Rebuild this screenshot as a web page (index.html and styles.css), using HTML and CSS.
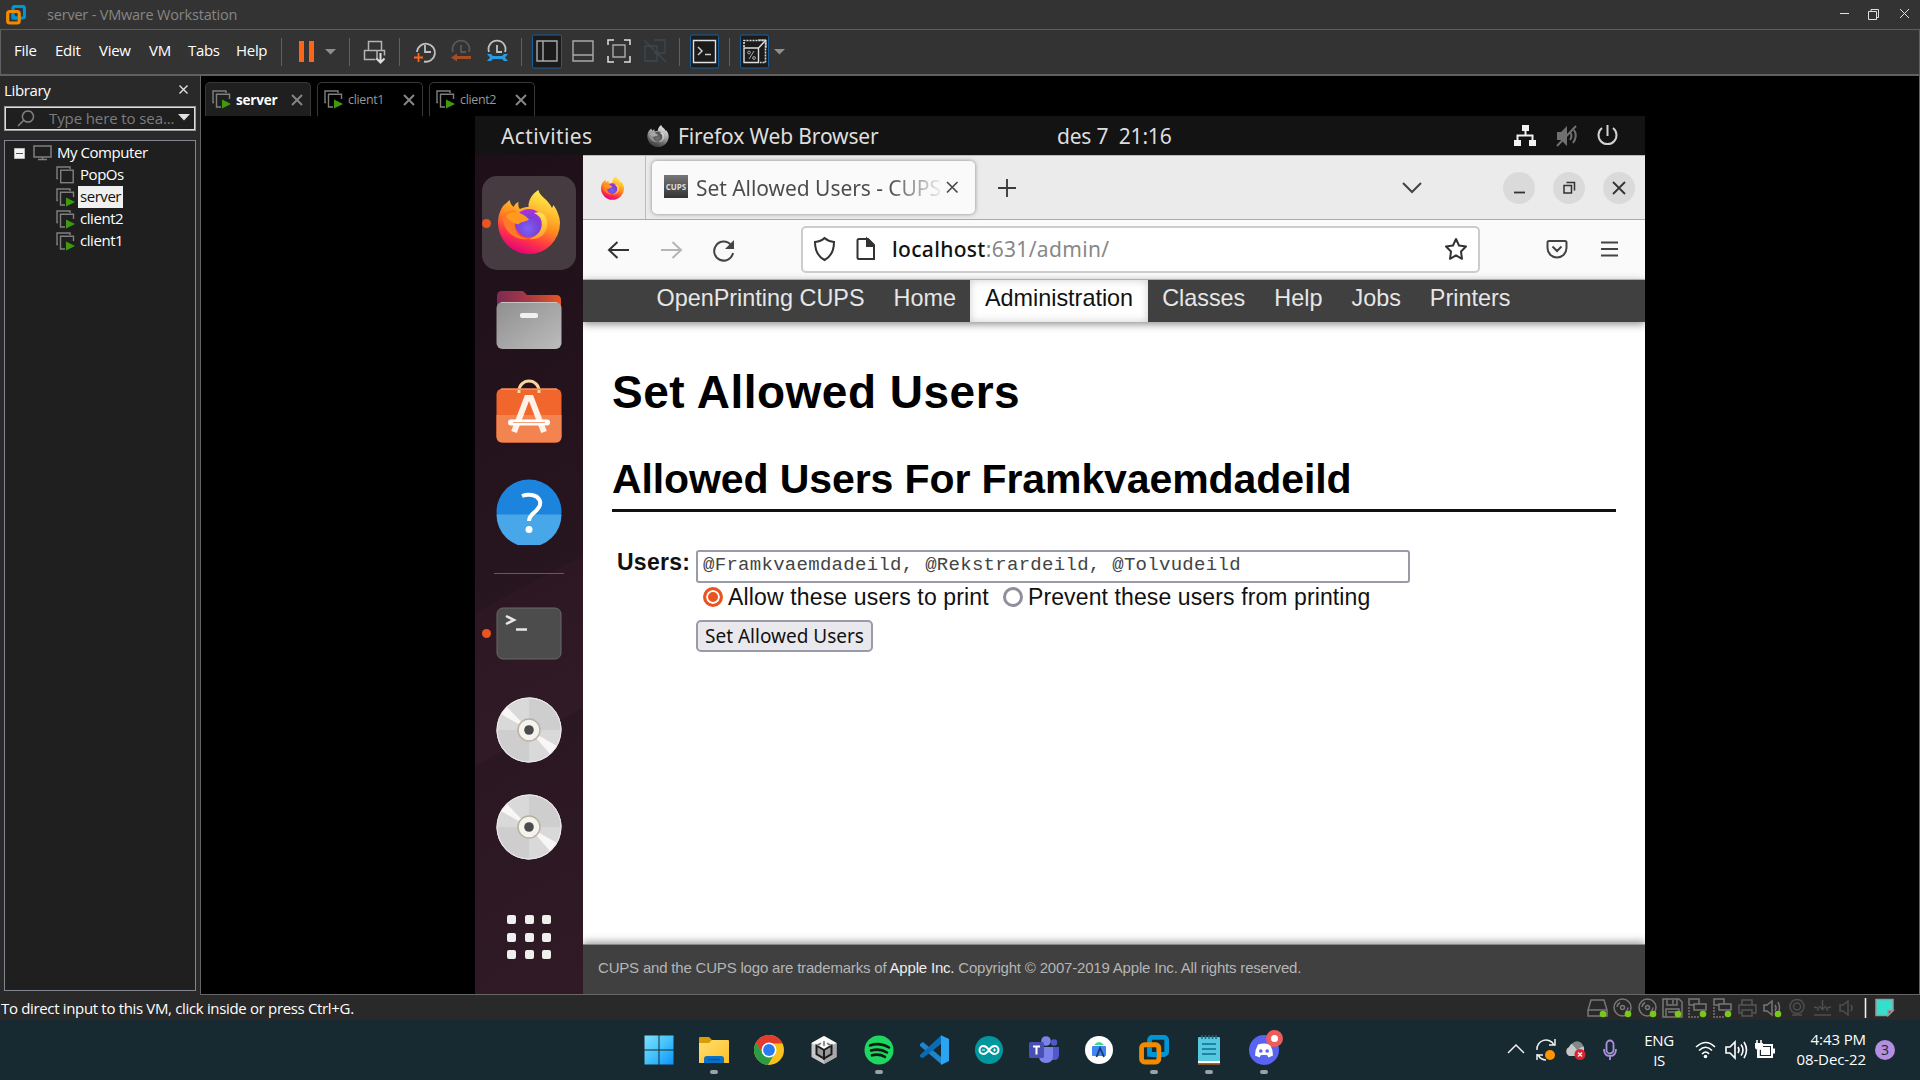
FILE: index.html
```html
<!DOCTYPE html>
<html lang="en">
<head>
<meta charset="utf-8">
<title>server - VMware Workstation</title>
<link rel="stylesheet" href="styles.css">
</head>
<body>
<svg class="defs" width="0" height="0">
  <defs>
    <linearGradient id="ff-body" x1="0.75" y1="0" x2="0.35" y2="1"><stop offset="0" stop-color="#fff44f"/><stop offset=".3" stop-color="#ffbd2f"/><stop offset=".52" stop-color="#ff8a1e"/><stop offset=".76" stop-color="#ff3647"/><stop offset="1" stop-color="#e3007a"/></linearGradient>
    <radialGradient id="ff-globe" cx=".45" cy=".7" r=".7"><stop offset="0" stop-color="#7a63f5"/><stop offset=".6" stop-color="#7b3fd6"/><stop offset="1" stop-color="#b22fd8"/></radialGradient>
    <linearGradient id="ff-swirl" x1="0" y1="0" x2="0" y2="1"><stop offset="0" stop-color="#ffe64a"/><stop offset="1" stop-color="#ff9a26"/></linearGradient>
    <linearGradient id="folder-front" x1="0" y1="0" x2="1" y2="1"><stop offset="0" stop-color="#8f8f8f"/><stop offset="1" stop-color="#bcbcbc"/></linearGradient>
    <linearGradient id="folder-back" x1="0" y1="0" x2="1" y2="0"><stop offset="0" stop-color="#7d2a55"/><stop offset=".5" stop-color="#a83a43"/><stop offset="1" stop-color="#e95420"/></linearGradient>
    <linearGradient id="win" x1="0" y1="0" x2="1" y2="1"><stop offset="0" stop-color="#7fe0fc"/><stop offset=".5" stop-color="#43c2fb"/><stop offset="1" stop-color="#0a94fb"/></linearGradient>
    <linearGradient id="files" x1="0" y1="0" x2="1" y2="1"><stop offset="0" stop-color="#ffdf70"/><stop offset="1" stop-color="#fdbf26"/></linearGradient>
    <symbol id="firefox" viewBox="0 0 62 64">
      <path fill="url(#ff-body)" d="M11.500 10C12.500 14 14 15.500 15.500 17C17 14 19 12.500 20.500 12C20 15 20.500 17.500 22 19C25 17.500 28 17 30.500 17C30 10 35 3 40.500 0C41 6 51 10 54 18L55.500 15C59 20 62 27 62 33A31 31 0 0 1 0 33C0 25 3 18 6 15C8 13 10 12 11.500 10Z"/>
      <circle cx="31" cy="33" r="14" fill="url(#ff-globe)"/>
      <path fill="url(#ff-swirl)" d="M36 23C42 21 46 23 48 28C53 40 43 51 31 49C40 46 45 40 43.500 31C42.500 27 40 25 36 23Z"/>
      <path fill="#ff7a26" d="M5 28C8 22 13 20 18 21C16 27 15 36 18 41C20 46 25 48 31 49C17 51 5 41 5 28Z"/>
      <path fill="#ff9a1f" d="M8 26C14 19 24 22 31 29.500C28 32 24 31 20 34.500C15 33 10 30 8 26Z"/>
    </symbol>
    <symbol id="vmware" viewBox="0 0 20 20">
      <rect x="7" y="1.500" width="11.500" height="11.500" rx="2" fill="none" stroke="#0095d5" stroke-width="3.200"/>
      <rect x="1.700" y="6.500" width="11.500" height="11.500" rx="2" fill="none" stroke="#f38b00" stroke-width="3.200"/>
      <path d="M7 8v5h5" fill="none" stroke="#0095d5" stroke-width="3"/>
    </symbol>
    <symbol id="vm-off" viewBox="0 0 19 19">
      <path d="M2 12.500H1V1h13v2" fill="none" stroke="#808080" stroke-width="1.400"/>
      <rect x="4.700" y="4.200" width="12.500" height="12.500" fill="#1f1f1f" stroke="#808080" stroke-width="1.400"/>
    </symbol>
    <symbol id="vm-on" viewBox="0 0 19 19">
      <path d="M2 12.500H1V1h13v2M9 17H4.500V4.200H17.500V9" fill="none" stroke="#808080" stroke-width="1.400"/>
      <path d="M10 9.500 19 14 10 18.500Z" fill="#3f9a10"/>
    </symbol>
    <symbol id="disc" viewBox="0 0 66 66">
      <circle cx="33" cy="33" r="32.500" fill="#d9d9d9"/>
      <path d="M33 33V.5A32.500 32.500 0 0 1 65.500 33ZM33 33V65.500A32.500 32.500 0 0 1 .5 33Z" fill="#cecece"/>
      <path d="M33 33 5 17 11 10ZM33 33 61 49 54 57Z" fill="#f8f7f5"/>
      <circle cx="33" cy="33" r="32" fill="none" stroke="#ececec"/>
      <circle cx="33" cy="33" r="11" fill="#f5f3ef" stroke="#b9b09e" stroke-width="1.400"/>
      <circle cx="33" cy="33" r="4.800" fill="#4b4b4b"/>
    </symbol>
    <symbol id="s-disc" viewBox="0 0 20 20"><circle cx="9.500" cy="9.500" r="8.500"/><circle cx="9.500" cy="9.500" r="2"/><path d="M4 9a6 6 0 0 1 3-4.500M15 9.500a6 6 0 0 1-2 4"/></symbol>
    <symbol id="s-net" viewBox="0 0 20 20"><path d="M6 7H1V1h10v5M6 7v5h12V6H6Z"/><path d="M1 9v10h11" stroke-dasharray="2 1"/></symbol>
  </defs>
</svg>

<div class="desktop">
  <header class="titlebar">
    <svg class="app-logo" width="20" height="20"><use href="#vmware"/></svg>
    <span class="app-title">server - VMware Workstation</span>
    <svg class="win-controls" width="84" height="20" fill="none" stroke="#e0e0e0"><path d="M5 9.500h9M33.500 7.500h8v8h-8ZM36 7V5.500h7.500v8H42M65 5l9 9M74 5l-9 9"/></svg>
  </header>

  <div class="toolbar">
    <nav class="menu"><span class="m1">File</span><span class="m2">Edit</span><span class="m3">View</span><span class="m4">VM</span><span class="m5">Tabs</span><span class="m6">Help</span></nav>
    <i class="sep"></i>
    <svg class="tool pause" width="67" height="34"><path d="M17 7h5v21h-5ZM27 7h5v21h-5Z" fill="#ff6517"/><path d="M43 15h11l-5.500 5.500Z" fill="#8e8e8e"/></svg>
    <i class="sep"></i>
    <svg class="tool" width="49" height="34" fill="none" stroke="#b4b4b4" stroke-width="1.500"><path d="M18.500 16V7.500h13V16M14.500 16.500h20v5M27 16.500v5M14.500 16v9.500h11M27 25.500v-9"/><path d="M30.500 19v9M26.500 24.500l4 4 4-4" stroke="#ddd" stroke-width="2"/></svg>
    <i class="sep"></i>
    <svg class="tool" width="121" height="34">
      <path d="M17 18A9 9 0 1 1 24 27.500M25 11v7h6" fill="none" stroke="#c0c0c0" stroke-width="1.800"/><path d="M14 23.500h9M18.500 19v9" stroke="#ff6517" stroke-width="1.800"/>
      <path d="M53 18A8.500 8.500 0 1 1 69 18M61 11v7h5" fill="none" stroke="#585858" stroke-width="1.800"/><path d="M51 23.500l6-4v2.500h14v3H57v2.500Z" fill="#a34e25"/>
      <path d="M89 18A8.500 8.500 0 1 1 105 18M97 11v7h5" fill="none" stroke="#c0c0c0" stroke-width="1.800"/><path d="M87 20h4l2 2h9l2-2h4l-3 3.500 3 3.500h-4l-2-2h-9l-2 2h-4l3-3.500Z" fill="#249de4"/>
    </svg>
    <i class="sep"></i>
    <svg class="tool" width="157" height="36">
      <rect x="10.500" y="2" width="29" height="33" rx="1.500" fill="#1b1b1b" stroke="#17609f"/>
      <g fill="none" stroke="#aaa" stroke-width="1.400"><path d="M15 8h20v20H15ZM21 8v20M51 8h20v20H51ZM51 22h20"/><path d="M91 12h12v12H91Z"/></g>
      <path d="M86 12V7h6M102 7h6v5M108 23v6h-6M92 29h-6v-6" fill="none" stroke="#e0e0e0" stroke-width="1.500"/>
      <path d="M132 7h11v13h-11M123 13h12v15h-12ZM122 7l22 22" fill="none" stroke="#3b4854" stroke-width="1.300"/>
    </svg>
    <i class="sep"></i>
    <svg class="tool" width="49" height="36"><rect x="10.500" y="2" width="28" height="33" rx="1.500" fill="#1b1b1b" stroke="#17609f"/><path d="M13.500 7.500h22v22h-22Z" fill="none" stroke="#e0e0e0" stroke-width="1.400"/><path d="m18 14 4 4-4 4M25 21.500h6" fill="none" stroke="#ccc" stroke-width="1.500"/></svg>
    <i class="sep"></i>
    <svg class="tool" width="60" height="36"><rect x="10.500" y="2" width="28" height="33" rx="1.500" fill="#1b1b1b" stroke="#17609f"/><path d="M14 15h14.500v14.500H14ZM28.500 15l7-7.500" fill="none" stroke="#ddd" stroke-width="1.400"/><path d="M14 14V7.500h21.500v22H30" fill="none" stroke="#ddd" stroke-width="1.600" stroke-dasharray="2 1"/><path d="M28 7h8v8" fill="none" stroke="#ddd"/><circle cx="19" cy="19.500" r="1.400" fill="none" stroke="#aaa"/><circle cx="24" cy="25" r="1.400" fill="none" stroke="#aaa"/><path d="m24 18-5 8" stroke="#aaa"/><path d="M44 16h11l-5.500 5.500Z" fill="#8e8e8e"/></svg>
  </div>

  <main class="workspace">
    <aside class="library">
      <div class="lib-head"><span>Library</span><svg width="10" height="10"><path d="m.5.5 8 8m0-8-8 8" stroke="#e6e6e6" stroke-width="1.300"/></svg></div>
      <div class="search">
        <svg width="18" height="18"><path d="M1 17l5.500-5.500M11 2a5.500 5.500 0 1 1-.1 0Z" fill="none" stroke="#808080" stroke-width="1.500"/></svg>
        <span>Type here to sea...</span>
        <svg width="12" height="7"><path d="M0 0h12L6 6.500Z" fill="#e0e0e0"/></svg>
      </div>
      <ul class="tree">
        <li class="root"><svg width="11" height="11"><path d="M.5.5h10v10H.5Z" fill="#f4f4f4" stroke="#bbb"/><path d="M2 5.500h7" stroke="#3b4fa0"/></svg><svg width="19" height="16"><path d="M1 1h17v11H1ZM5 14.500h9M9.500 12v2" fill="none" stroke="#808080" stroke-width="1.500"/></svg><span>My Computer</span></li>
        <li><svg width="19" height="19"><use href="#vm-off"/></svg><span>PopOs</span></li>
        <li class="selected"><svg width="19" height="19"><use href="#vm-on"/></svg><span>server</span></li>
        <li><svg width="19" height="19"><use href="#vm-on"/></svg><span>client2</span></li>
        <li><svg width="19" height="19"><use href="#vm-on"/></svg><span>client1</span></li>
      </ul>
    </aside>

    <section class="console">
      <div class="vm-tabs">
        <div class="vm-tab active"><svg width="19" height="19"><use href="#vm-on"/></svg><span>server</span><svg class="x" width="12" height="12"><path d="m1 1 10 10m0-10L1 11"/></svg></div>
        <div class="vm-tab"><svg width="19" height="19"><use href="#vm-on"/></svg><span>client1</span><svg class="x" width="12" height="12"><path d="m1 1 10 10m0-10L1 11"/></svg></div>
        <div class="vm-tab"><svg width="19" height="19"><use href="#vm-on"/></svg><span>client2</span><svg class="x" width="12" height="12"><path d="m1 1 10 10m0-10L1 11"/></svg></div>
      </div>

      <div class="guest">
        <div class="gnome-bar">
          <div class="gnome-left"><span class="activities">Activities</span><svg class="ff-mini" width="22" height="22"><use href="#firefox"/></svg><span class="app-name">Firefox Web Browser</span></div>
          <span class="clock">des 7&nbsp; 21:16</span>
          <svg class="gnome-status" width="106" height="24">
            <path d="M9 1h7v6H9ZM1 16h7v6H1ZM16 16h7v6h-7Z" fill="#f2f2f2"/><path d="M12.500 6v6M4.500 17v-5.500h15V17" fill="none" stroke="#f2f2f2" stroke-width="2"/>
            <path d="M44 8h4l6-6v20l-6-6h-4Z" fill="#707070"/><path d="M44 22 63 2M57 8q3 4 0 8M61 6q4 6-1 13" fill="none" stroke="#707070" stroke-width="2"/>
            <path d="M89 4a9 9 0 1 0 11 0M94.500 1v11" fill="none" stroke="#d2d2d2" stroke-width="2"/>
          </svg>
        </div>

        <div class="guest-body">
          <div class="dock">
            <div class="dock-tile"><i class="dot"></i><svg width="62" height="64"><use href="#firefox"/></svg></div>
            <svg class="d-folder" width="66" height="60"><path d="M1 18V6q0-5 5-5h20q2 0 3 2l2 2h29q5 0 5 5v10Z" fill="url(#folder-back)"/><rect x=".5" y="12" width="65" height="47" rx="6" fill="url(#folder-front)"/><path d="M5 12.500h56" stroke="#c5c5c5"/><rect x="24" y="23" width="18" height="5" rx="2" fill="#f0f0f0"/></svg>
            <svg class="d-store" width="66" height="64"><path d="M23 14V12a10 10 0 0 1 20 0v2" fill="none" stroke="#f7d6a0" stroke-width="3"/><rect x=".5" y="9.500" width="65" height="54" rx="6" fill="#f1662c"/><path d="M.5 36h65v21.500q0 6-6 6h-53q-6 0-6-6Z" fill="#f4844f"/><path d="M5 10h56" stroke="#ffa77d"/><path d="M23 14V11M43 14V11" stroke="#f7d6a0" stroke-width="3"/><path d="M18 53 31 19h4l13 34" fill="none" stroke="#fff0e8" stroke-width="6"/><path d="M15 43.500h36" stroke="#fff" stroke-width="6" stroke-linecap="round"/><path d="M17 43.500h32" stroke="#f4a27d"/></svg>
            <svg class="d-help" width="66" height="66"><circle cx="33" cy="33" r="32.500" fill="#1c84dc"/><path d="M.5 35.500h65A32.500 32.500 0 0 1 .5 35.500Z" fill="#48a7e8"/><path d="M26 17q5-2 10-1c7 1 10 7 7 12-3 6-10 7-10 14" fill="none" stroke="#fff" stroke-width="4"/><circle cx="33" cy="50.500" r="3.500" fill="#fff"/></svg>
            <i class="d-sep"></i>
            <div class="d-term"><i class="dot"></i><svg width="66" height="53"><rect x="1" y="1" width="64" height="51" rx="6" fill="#4c4c4c" stroke="#696969"/><path d="m10 9 8 4-8 4M20 22.500h11" fill="none" stroke="#e6e6e6" stroke-width="2.500"/></svg></div>
            <svg class="d-disc1" width="66" height="66"><use href="#disc"/></svg>
            <svg class="d-disc2" width="66" height="66"><use href="#disc"/></svg>
            <div class="d-grid"><i></i><i></i><i></i><i></i><i></i><i></i><i></i><i></i><i></i></div>
          </div>

          <div class="browser">
            <div class="tabstrip">
              <div class="pinned"><svg width="23" height="24"><use href="#firefox"/></svg></div>
              <div class="tab"><b class="favicon">CUPS</b><span class="tab-title">Set Allowed Users - CUPS</span><svg width="13" height="13"><path d="m1 1 10.500 10.500M11.500 1 1 11.500" stroke="#4a4a4a" stroke-width="1.700"/></svg></div>
              <svg class="plus" width="18" height="18"><path d="M9 0v18M0 9h18" stroke="#3d3d3d" stroke-width="1.900"/></svg>
              <svg class="alltabs" width="20" height="12"><path d="m1 1 9 9 9-9" fill="none" stroke="#444" stroke-width="2"/></svg>
              <div class="wbtn"><svg width="14" height="14"><path d="M2 11.500h11" stroke="#333" stroke-width="1.800"/></svg></div>
              <div class="wbtn"><svg width="14" height="14"><path d="M2 4.500h7.500V12H2ZM4.500 1.500h8v8" fill="none" stroke="#333" stroke-width="1.500"/></svg></div>
              <div class="wbtn"><svg width="14" height="14"><path d="m1 1 12 12M13 1 1 13" stroke="#333" stroke-width="1.800"/></svg></div>
            </div>
            <div class="navbar">
              <svg class="nav-icons" width="128" height="24" fill="none" stroke-width="2"><path d="M22 12H2M10.500 4 2 12l8.500 8" stroke="#333"/><path d="M54 12h20M65.500 4l8.500 8-8.500 8" stroke="#b5b5b5"/><path d="M124 7a9.500 9.500 0 1 0 2 8" stroke="#444"/><path d="M127 2v9h-9Z" fill="#444"/></svg>
              <div class="urlbar">
                <svg width="62" height="26" fill="none" stroke="#333" stroke-width="2"><path d="M11.500 2q4 3.500 9.500 4 0 13-9.500 18Q2 19 2 6q6-.5 9.500-4Z"/><path d="M46 3h9l6 6v14H46q-1.500 0-1.500-1.500v-17Q44.500 3 46 3Z"/><path d="M54 3v7h7Z" fill="#333"/></svg>
                <span class="url"><b>localhost</b>:631/admin/</span>
                <svg class="star" width="24" height="24"><path d="m12 2 3 6.500 7 1-5 5 1 7.300-6-3.500-6 3.500 1-7.300-5-5 7-1Z" fill="none" stroke="#333" stroke-width="2" stroke-linejoin="round"/></svg>
              </div>
              <svg class="nav-right" width="73" height="22" fill="none" stroke="#444" stroke-width="2"><path d="M3 2h16q1.500 0 1.500 1.500V9a9.500 9.500 0 0 1-19 0V3.500Q1.500 2 3 2ZM6.500 7.500 11 12l4.500-4.500M55 3.500h17M55 10h17M55 16.500h17"/></svg>
            </div>
            <div class="cups-nav"><span class="brand">OpenPrinting CUPS</span><span>Home</span><span class="current">Administration</span><span>Classes</span><span>Help</span><span>Jobs</span><span>Printers</span></div>
            <div class="cups-page">
              <h1>Set Allowed Users</h1>
              <h2>Allowed Users For Framkvaemdadeild</h2>
              <div class="form">
                <b class="label">Users:</b>
                <div class="fields">
                  <div class="input"><span>@Framkvaemdadeild, @Rekstrardeild, @Tolvudeild</span></div>
                  <div class="radios"><i class="radio on"></i><span class="r1">Allow these users to print</span><i class="radio"></i><span class="r2">Prevent these users from printing</span></div>
                  <div class="button"><span>Set Allowed Users</span></div>
                </div>
              </div>
            </div>
            <div class="cups-foot"><span>CUPS and the CUPS logo are trademarks of <b>Apple Inc.</b> Copyright © 2007-2019 Apple Inc. All rights reserved.</span></div>
          </div>
        </div>
      </div>
    </section>
  </main>

  <footer class="statusbar">
    <span class="hint">To direct input to this VM, click inside or press Ctrl+G.</span>
    <svg class="devices" width="320" height="20" fill="none" stroke="#777" stroke-width="1.500">
      <path d="M4 2h13l3 10v6H1v-6ZM1 12h19"/><use href="#s-disc" x="26" width="20" height="20"/><use href="#s-disc" x="51" width="20" height="20"/>
      <path d="M76 1h16l3 3v15H76ZM80 1v6h10V1M86 2v4M79 19v-8h13v8M81 14h8"/>
      <use href="#s-net" x="101" width="20" height="20"/><use href="#s-net" x="126" width="20" height="20"/>
      <g stroke="#555"><path d="M155 7V2h10v5M155 15h-3V7h17v8h-3M155 12h10v6h-10Z"/></g>
      <path d="M177 7h3l5-4v14l-5-4h-3ZM188 7q2 3 0 6M191 4q3 6 0 11"/>
      <g stroke="#4e4e4e"><circle cx="210" cy="8.500" r="7"/><circle cx="210" cy="8.500" r="3.500"/><path d="M205 17h10M227 17h17M235.500 2v9M232 8l3.500 3.500L239 8M227 9l4 1v3M244 9l-4 1v3M253 7h3l5-4v14l-5-4h-3ZM264 7q2 3 0 6"/></g>
      <g fill="#7ac81a" stroke="none"><circle cx="16" cy="16" r="3.300"/><circle cx="41" cy="16" r="3.300"/><circle cx="66" cy="16" r="3.300"/><circle cx="91" cy="16" r="3.300"/><circle cx="116" cy="16" r="3.300"/><circle cx="141" cy="16" r="3.300"/><circle cx="191" cy="16" r="3.300"/></g>
      <path d="M278.500 0v20" stroke="#eee" stroke-width="1.600"/><path d="M289 1.500h17v11l-5 5h-12Z" fill="#34e0cb" stroke="#999"/><path d="M306 12.500h-5v5Z" fill="#555" stroke="#999"/>
    </svg>
  </footer>

  <div class="taskbar">
    <div class="apps">
      <div><svg viewBox="0 0 30 30"><path d="M.5.5h14v14H.5ZM15.500.5h14v14h-14ZM.5 15.500h14v14H.5ZM15.500 15.500h14v14h-14Z" fill="url(#win)"/></svg></div>
      <div class="running"><svg viewBox="0 0 30 30"><path d="M0 10V3q0-1 1-1h9l3 3h3v5Z" fill="#dc9c05"/><path d="M0 8h10l3-3h16q1 0 1 1v22H0Z" fill="url(#files)"/><path d="M5 28v-4q0-3 3-3h14q3 0 3 3v4Z" fill="#0a70c7"/><path d="M9 24.500h12" stroke="#075397" stroke-width="1.200"/></svg></div>
      <div><svg viewBox="0 0 30 30"><circle cx="15" cy="15" r="15" fill="#f9c11c"/><path d="M28.500 8.500H15L8 18.500 2 7.500A15 15 0 0 1 28.500 8.500Z" fill="#e33b2e"/><path d="M2 7.500A15 15 0 0 0 14 30L20.500 18.500 8.500 18.500Z" fill="#2b9c46"/><circle cx="15" cy="15" r="7.500" fill="#fff"/><circle cx="15" cy="15" r="5.900" fill="#2a7bf0"/></svg></div>
      <div><svg viewBox="0 0 30 30"><path d="m15 1 12.500 7v14L15 29 2.500 22V8Z" fill="#c7c7c7"/><path d="m15 1 12.500 7L15 15 2.500 8Z" fill="#fafafa"/><path d="M15 15v14l12.500-7V8Z" fill="#a8a8a8"/><path d="m7.500 10.500 7.500 4.500v8.500l-7.500-4.300ZM22.500 10.500 15 15v8.500l7.500-4.300Z" fill="#999" stroke="#1c1c1c" stroke-width="2"/><path d="m8 10.500 4-2.300M22 10.500l-4-2.300M15 6v5" stroke="#777" stroke-width="1.600"/></svg></div>
      <div class="running"><svg viewBox="0 0 30 30"><circle cx="15" cy="15" r="14.500" fill="#1ed760"/><path d="M6 10.500q10-3.500 19 2M7 15.500q9-2.500 16 2M8 20.300q7-2 13 1.500" fill="none" stroke="#101a14" stroke-width="2.600" stroke-linecap="round"/></svg></div>
      <div><svg viewBox="0 0 30 30"><path d="M1 9 4 7l18 15v7L1 11Z" fill="#1b86cf"/><path d="M1 20 22 .5V9L4 23l-3-1Z" fill="#0a6cb5"/><path d="M22 .3 30 4v22l-8 4Z" fill="#2aa5f3"/></svg></div>
      <div><svg viewBox="0 0 30 30"><circle cx="15" cy="15" r="14" fill="#00979d"/><path d="M15 15c-2-3-3.500-4-5.500-4a4 4 0 0 0 0 8c2 0 3.500-1 5.500-4 2-3 3.500-4 5.500-4a4 4 0 0 1 0 8c-2 0-3.500-1-5.500-4Z" fill="none" stroke="#fff" stroke-width="2"/><path d="M8 15h3M19 15h3M20.500 13.500v3" stroke="#fff"/></svg></div>
      <div><svg viewBox="0 0 30 30"><circle cx="25" cy="7.500" r="3.200" fill="#5059c9"/><path d="M20 12h10v8q0 5-5 5h-5Z" fill="#5059c9"/><circle cx="17" cy="6" r="4.800" fill="#7b83eb"/><path d="M10 12h14v9q0 7-7 7t-7-7Z" fill="#7b83eb"/><rect y="7" width="15" height="16" rx="1.500" fill="#4950b5"/><path d="M4 11.500h7M7.500 11.500v8" stroke="#fff" stroke-width="2"/></svg></div>
      <div><svg viewBox="0 0 30 30"><circle cx="15" cy="15" r="14" fill="#fff"/><rect x="8" y="11" width="14" height="10" rx="1" fill="#4285f4"/><path d="M10 10q5-6 10 0Z" fill="#3ddc84"/><path d="m12.500 22 3.500-9 4 9" fill="none" stroke="#173a66" stroke-width="1.800"/></svg></div>
      <div class="running"><svg viewBox="0 0 20 20"><use href="#vmware"/></svg></div>
      <div class="running"><svg viewBox="0 0 30 30"><rect x="4" y="2" width="22" height="26" rx="1" fill="#55c8df"/><path d="M8 0v4M11.500 0v4M15 0v4M18.500 0v4M22 0v4" stroke="#176a86" stroke-width="1.500"/><path d="M8 9h14M8 14h14M8 19h14" stroke="#0c6c94" stroke-width="1.700"/><path d="M4 26h22v2H4Z" fill="#fff"/><path d="M4 28h22v1.700H4Z" fill="#b65c22"/></svg></div>
      <div class="running"><svg viewBox="0 0 30 30"><circle cx="15" cy="15" r="15" fill="#5865f2"/><path d="M9 9.500q6-2 12 0 3 5 3 11l-4.500 2-1.500-2.500h-6L10.500 22.500 6 20.500q0-6 3-11Z" fill="#fff"/><circle cx="11.800" cy="16" r="1.800" fill="#5865f2"/><circle cx="18.200" cy="16" r="1.800" fill="#5865f2"/></svg><i class="alert"></i></div>
    </div>
    <div class="tray">
      <svg class="tray-icons" width="114" height="24" fill="none" stroke="#f0f0f0" stroke-width="1.500">
        <path d="m1 15 8-8 8 8"/><path d="M30 12a9 9 0 0 1 17-5M48 1v6h-6M30 22v-6M30 17h6M31 17q3 5 8 5"/><circle cx="43" cy="17" r="5" fill="#ff9500" stroke="none"/>
        <path d="M62 18a5 5 0 0 1 0-9 6 6 0 0 1 9-3 5 5 0 0 1 6 6v6Z" fill="#c4c8c9" stroke="none"/><path d="M65 6a6 6 0 0 1 11 3q-4 0-5 4Z" fill="#828789" stroke="none"/><circle cx="73" cy="16.500" r="5.500" fill="#d9232e" stroke="none"/><path d="m71 14.500 4 4m0-4-4 4"/>
        <path d="M99.500 6a3.500 3.500 0 0 1 7 0v6a3.500 3.500 0 0 1-7 0ZM97 11q0 7 6 7t6-7M103 18v4" stroke="#ae90e0" stroke-width="1.800"/>
      </svg>
      <span class="lang">ENG<br>IS</span>
      <svg class="tray-net" width="82" height="24" fill="none" stroke="#fff" stroke-width="1.600">
        <path d="M1 9q10-9 19 0M4 12.500q7-6.500 13 0M7 16q4-4 7 0"/><circle cx="10.500" cy="18.500" r="1.800" fill="#fff" stroke="none"/>
        <path d="M31 9h4l5-5v16l-5-5h-4ZM43 9q2 3 0 6M46 6.500q4 5.500 0 11M49 4q5 8 0 16"/>
        <path d="M68 7h9v12H63v-7M79 10.500v5" stroke-width="2"/><path d="M66 9h9v8h-9ZM60 5h8v4q0 3-4 3t-4-3Z" fill="#fff" stroke="none"/><path d="M62 2v4M66 2v4M64 10v8"/>
      </svg>
      <span class="time">4:43 PM<br>08-Dec-22</span>
      <b class="count">3</b>
    </div>
  </div>
</div>
</body>
</html>
```
FILE: styles.css
```css
* { box-sizing: border-box; }
html, body { margin: 0; width: 1920px; height: 1080px; overflow: hidden; background: #000; }
body { font-family: "Open Sans", "Noto Sans", sans-serif; font-size: 15px; color: #fff; }
svg { display: block; flex: none; }
span, b { white-space: nowrap; }
i { display: block; flex: none; }
.defs { position: absolute; }
.desktop { display: flex; flex-direction: column; height: 1080px; }

/* host window chrome */
.titlebar { display: flex; height: 30px; flex: none; align-items: center; background: #333; border-bottom: 1px solid #5e5e5e; padding-left: 6px; }
.app-title { margin-left: 21px; color: #868686; font-size: 14.5px; letter-spacing: -.2px; }
.win-controls { margin-left: auto; margin-right: 1px; margin-top: -1px; }
.toolbar { display: flex; height: 46px; flex: none; align-items: center; background: #333; border: solid #606060; border-width: 0 1px 2px; }
.menu { display: flex; width: 280px; flex: none; padding-left: 13px; letter-spacing: -.3px; }
.menu span { margin-top: -4px; flex: none; }
.m1 { width: 41px; } .m2 { width: 44px; } .m3 { width: 50px; } .m4 { width: 39px; } .m5 { width: 48px; }
.sep { width: 1px; height: 28px; background: #606060; }
.tool { margin-top: -2px; }

.workspace { display: flex; height: 919px; flex: none; background: #292929; }
.library { width: 200px; flex: none; padding: 0 4px; }
.lib-head { display: flex; height: 30px; align-items: center; justify-content: space-between; padding-right: 7px; letter-spacing: -.35px; }
.lib-head span { margin-top: -3px; }
.lib-head svg { margin-top: -3px; }
.search { display: flex; align-items: center; height: 25px; width: 192px; background: #1f1f1f; border: 2px solid #ddd; outline: 1px solid #999; outline-offset: -1px; padding: 0 4px 2px 11px; color: #7c7c7c; }
.search span { margin-left: 14px; width: 129px; letter-spacing: -.1px; flex: none; }
.tree { margin: 9px 0 0; padding: 1px 0 0; list-style: none; width: 192px; height: 851px; background: #1f1f1f; border: 1px solid #82868e; }
.tree li { display: flex; height: 22px; align-items: center; padding-left: 51px; letter-spacing: -.45px; }
.tree li span { margin-left: 3px; padding: 0 2px; line-height: 20px; padding-bottom: 2px; }
.tree li.root { padding-left: 9px; }
.tree li.root svg + svg { margin-left: 8px; }
.tree li.root span { margin-left: 3px; }
.tree .selected span { background: #f0f0f0; color: #111; }

.console { flex: 1; background: #000; border: solid #666; border-width: 0 1px 1px; }
.vm-tabs { display: flex; gap: 6px; height: 40px; padding: 6px 0 0 4px; }
.vm-tab { display: flex; align-items: center; width: 106px; border: 1px solid #383838; border-bottom: 0; border-radius: 5px 5px 0 0; padding: 0 7px 0 6px; font-size: 12.5px; color: #969696; letter-spacing: -.35px; }
.vm-tab.active { background: #1f1f1f; font-weight: 700; font-size: 13.5px; letter-spacing: -.2px; color: #fff; }
.vm-tab span { margin-left: 5px; }
.x { margin-left: auto; fill: none; stroke: #858585; stroke-width: 2; }

/* guest desktop */
.guest { width: 1170px; height: 878px; margin-left: 274px; font-family: "Noto Sans", "Open Sans", sans-serif; }
.gnome-bar { display: grid; grid-template-columns: 582px 1fr 132px; height: 39px; align-items: center; background: #131313; color: #dedede; font-size: 21px; }
.gnome-left { display: flex; align-items: center; padding-left: 26px; }
.activities { width: 146px; letter-spacing: .4px; }
.ff-mini { filter: grayscale(1); }
.app-name { margin-left: 9px; letter-spacing: -.13px; }
.clock { letter-spacing: -.2px; }
.guest-body { display: flex; height: 839px; }
.dock { display: flex; flex-direction: column; align-items: center; width: 108px; flex: none; background: linear-gradient(152deg, #1e0f18 0, #27151f 51%, #2d1722 51.2%, #301a26 68%, #2b1722 68.2%, #2f1a26 100%); }
.dock-tile { display: flex; align-items: center; width: 94px; height: 94px; margin-top: 21px; border-radius: 15px; background: #473b42; flex: none; }
.dot { width: 9px; height: 9px; border-radius: 50%; background: #e95420; }
.dock-tile svg { margin: -3px 0 0 7px; }
.d-folder { margin-top: 20px; } .d-store { margin-top: 29px; } .d-help { margin-top: 36px; }
.d-sep { width: 70px; height: 1px; margin-top: 28px; background: #665860; flex: none; }
.d-term { display: flex; align-items: center; gap: 5px; width: 94px; margin-top: 33px; }
.d-disc1 { margin-top: 37px; } .d-disc2 { margin-top: 31px; }
.d-grid { display: grid; grid-template-columns: repeat(3, 9px); gap: 8.500px; margin-top: 55px; }
.d-grid i { width: 9px; height: 9px; border-radius: 2px; background: #efefed; }

.browser { display: flex; flex-direction: column; width: 1062px; background: #fff; color: #111; overflow: hidden; }
.tabstrip { display: flex; align-items: center; height: 65px; flex: none; background: #ebebeb; border-top: 1px solid #bbb; border-bottom: 1px solid #aaa; }
.tabstrip > * { flex: none; }
.pinned { display: flex; align-items: center; justify-content: center; width: 63px; height: 63px; border-right: 1px solid #bbb; padding-right: 3px; }
.tab { display: flex; align-items: center; width: 323px; height: 53px; margin-left: 6px; padding-left: 12px; background: #fafafa; border-radius: 5px; box-shadow: 0 0 4px #888; }
.favicon { width: 24px; height: 23px; background: linear-gradient(#777, #333); color: #ddd; font: 700 8px/23px "Open Sans", sans-serif; text-align: center; margin-top: -3px; }
.tab-title { width: 246px; margin: 0 4px 0 8px; overflow: hidden; font-size: 21px; letter-spacing: -.05px; background: linear-gradient(90deg, #4a4a4a 78%, #e8e8e8 99%); -webkit-background-clip: text; background-clip: text; color: transparent; }
.plus { margin-left: 23px; }
.alltabs { margin-left: 386px; }
.wbtn { display: flex; align-items: center; justify-content: center; width: 32px; height: 32px; margin-right: 18px; border-radius: 50%; background: #dadada; }
.wbtn:last-child { margin-right: 0; }
.alltabs + .wbtn { margin-left: 81px; }
.navbar { display: flex; align-items: center; height: 60px; flex: none; background: #fafafa; border-bottom: 1px solid #bbb; }
.nav-icons { margin-left: 24px; }
.urlbar { display: flex; align-items: center; width: 679px; height: 47px; margin: -1px 0 0 66px; padding: 0 10px 0 10px; background: #fff; border: 2px solid #ccc; border-radius: 5px; }
.url { margin-left: 17px; color: #888; font-size: 21px; letter-spacing: .33px; }
.url b { color: #111; font-weight: 500; }
.star { margin-left: auto; }
.nav-right { margin-left: 66px; }

/* printer administration page */
.cups-nav { display: flex; height: 42px; flex: none; background: #404040; color: #e6e6e6; font: 23.400px/37px "Liberation Sans", sans-serif; padding-left: 59px; box-shadow: 0 2px 8px #888; }
.cups-nav span { padding: 0 14.500px; }
.cups-nav .current { background: #fff; color: #111; box-shadow: inset 0 0 8px #ccc; }
.cups-page { flex: 1; padding: 42px 29px 0; font-family: "Liberation Sans", sans-serif; }
h1, h2 { margin: 0; font-weight: 700; color: #000; white-space: nowrap; }
h1 { font-size: 46px; line-height: 57px; letter-spacing: .5px; }
h2 { margin-top: 23px; font-size: 41px; line-height: 70px; height: 68px; letter-spacing: -.1px; border-bottom: 3px solid #111; }
.form { display: flex; margin-top: 38px; font-size: 23px; }
.label { width: 84px; padding-left: 5px; line-height: 24px; letter-spacing: .25px; }
.input { display: flex; width: 714px; height: 33px; border: 2px solid #9b9aa8; border-radius: 3px; padding: 1px 5px 0; font: 19px/24px "Liberation Mono", monospace; letter-spacing: .29px; color: #444; }
.radios { display: flex; align-items: center; height: 28px; padding-left: 7px; }
.radio { width: 20px; height: 20px; border: 3px solid #8f8f9d; border-radius: 50%; background: #fff; }
.radio.on { border-color: #e95420; box-shadow: inset 0 0 0 2px #fff; background: #e95420; }
.radios span { margin-left: 5px; }
.r1 { width: 275px; letter-spacing: .15px; }
.r2 { letter-spacing: .11px; }
.button { display: flex; align-items: center; justify-content: center; width: 177px; height: 32px; margin-top: 9px; background: #e9e9ed; border: 2px solid #9b9aa8; border-radius: 5px; font: 19px "Noto Sans", sans-serif; }
.cups-foot { display: flex; align-items: center; height: 50px; flex: none; background: #404040; border-top: 1px solid #888; box-shadow: 0 -2px 8px #999; color: #b5b5b5; font: 15px "Liberation Sans", sans-serif; letter-spacing: -.19px; padding: 0 0 4px 15px; }
.cups-foot b { font-weight: 400; color: #eee; }

/* host status bar and taskbar */
.statusbar { display: flex; align-items: center; justify-content: space-between; height: 25px; flex: none; background: #292929; padding-left: 1px; }
.hint { letter-spacing: -.335px; }
.devices { margin-right: 13px; }
.taskbar { display: flex; height: 60px; flex: none; background: #182a31; padding-left: 631px; }
.apps { display: flex; }
.apps div { display: flex; flex-direction: column; align-items: center; position: relative; width: 55px; padding-top: 15px; }
.apps svg { width: 30px; height: 30px; }
.running::after { content: ""; width: 8px; height: 4px; margin-top: 5px; border-radius: 2px; background: #9ba1a4; }
.alert { position: absolute; left: 30px; top: 10px; width: 17px; height: 17px; border: 5px solid #ef5b5b; border-radius: 50%; background: #fff; }
.tray { display: flex; align-items: center; margin-left: auto; width: 413px; font-size: 15px; line-height: 20px; }
.lang { width: 40px; margin-left: 18px; margin-top: -1px; text-align: center; letter-spacing: -.4px; }
.tray-net { margin-left: 16px; }
.time { width: 89px; margin-top: -3px; text-align: right; letter-spacing: -.1px; }
.count { width: 20px; height: 20px; margin-left: 9px; border-radius: 50%; background: #b48ee0; color: #182a31; font-size: 14px; font-weight: 400; text-align: center; }
```
